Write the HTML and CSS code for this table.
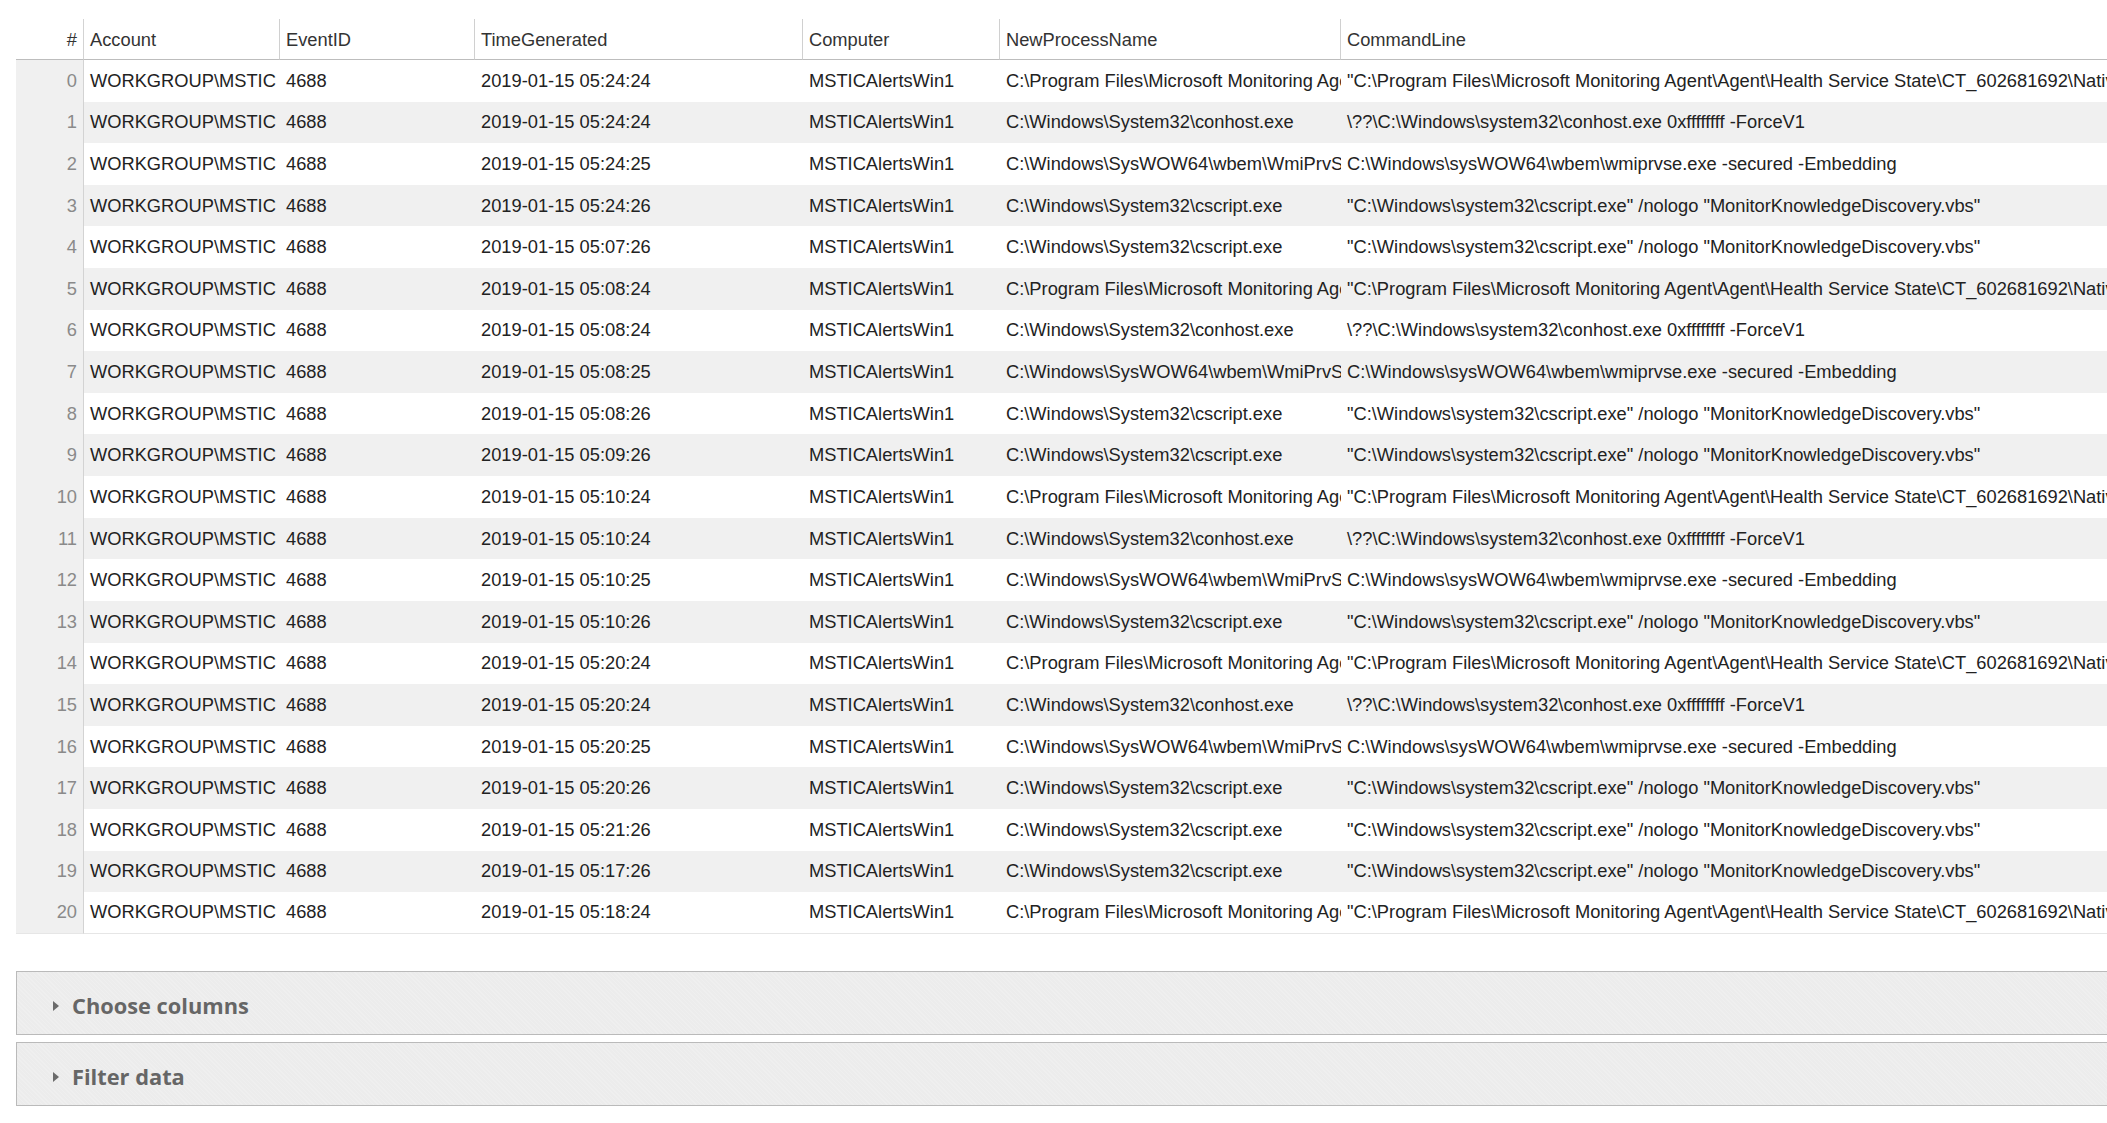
FILE: index.html
```html
<!DOCTYPE html>
<html>
<head>
<meta charset="utf-8">
<link rel="stylesheet" href="styles.css">
</head>
<body>
<div class="page">
  <table class="grid">
    <colgroup>
      <col class="c-idx"><col class="c-acc"><col class="c-evt"><col class="c-time"><col class="c-comp"><col class="c-proc"><col class="c-cmd">
    </colgroup>
    <thead>
      <tr><th class="idx">#</th><th>Account</th><th>EventID</th><th>TimeGenerated</th><th>Computer</th><th>NewProcessName</th><th>CommandLine</th></tr>
    </thead>
    <tbody id="rows">
      <tr><td class="idx">0</td><td>WORKGROUP\MSTIC</td><td>4688</td><td>2019-01-15 05:24:24</td><td>MSTICAlertsWin1</td><td>C:\Program Files\Microsoft Monitoring Agent\Agent\MonitoringHost.exe</td><td>"C:\Program Files\Microsoft Monitoring Agent\Agent\Health Service State\CT_602681692\NativeDSC\DesiredStateConfiguration\ASMHost.exe" GetInventory</td></tr>
      <tr><td class="idx">1</td><td>WORKGROUP\MSTIC</td><td>4688</td><td>2019-01-15 05:24:24</td><td>MSTICAlertsWin1</td><td>C:\Windows\System32\conhost.exe</td><td>\??\C:\Windows\system32\conhost.exe 0xffffffff -ForceV1</td></tr>
      <tr><td class="idx">2</td><td>WORKGROUP\MSTIC</td><td>4688</td><td>2019-01-15 05:24:25</td><td>MSTICAlertsWin1</td><td>C:\Windows\SysWOW64\wbem\WmiPrvSE.exe</td><td>C:\Windows\sysWOW64\wbem\wmiprvse.exe -secured -Embedding</td></tr>
      <tr><td class="idx">3</td><td>WORKGROUP\MSTIC</td><td>4688</td><td>2019-01-15 05:24:26</td><td>MSTICAlertsWin1</td><td>C:\Windows\System32\cscript.exe</td><td>"C:\Windows\system32\cscript.exe" /nologo "MonitorKnowledgeDiscovery.vbs"</td></tr>
      <tr><td class="idx">4</td><td>WORKGROUP\MSTIC</td><td>4688</td><td>2019-01-15 05:07:26</td><td>MSTICAlertsWin1</td><td>C:\Windows\System32\cscript.exe</td><td>"C:\Windows\system32\cscript.exe" /nologo "MonitorKnowledgeDiscovery.vbs"</td></tr>
      <tr><td class="idx">5</td><td>WORKGROUP\MSTIC</td><td>4688</td><td>2019-01-15 05:08:24</td><td>MSTICAlertsWin1</td><td>C:\Program Files\Microsoft Monitoring Agent\Agent\MonitoringHost.exe</td><td>"C:\Program Files\Microsoft Monitoring Agent\Agent\Health Service State\CT_602681692\NativeDSC\DesiredStateConfiguration\ASMHost.exe" GetInventory</td></tr>
      <tr><td class="idx">6</td><td>WORKGROUP\MSTIC</td><td>4688</td><td>2019-01-15 05:08:24</td><td>MSTICAlertsWin1</td><td>C:\Windows\System32\conhost.exe</td><td>\??\C:\Windows\system32\conhost.exe 0xffffffff -ForceV1</td></tr>
      <tr><td class="idx">7</td><td>WORKGROUP\MSTIC</td><td>4688</td><td>2019-01-15 05:08:25</td><td>MSTICAlertsWin1</td><td>C:\Windows\SysWOW64\wbem\WmiPrvSE.exe</td><td>C:\Windows\sysWOW64\wbem\wmiprvse.exe -secured -Embedding</td></tr>
      <tr><td class="idx">8</td><td>WORKGROUP\MSTIC</td><td>4688</td><td>2019-01-15 05:08:26</td><td>MSTICAlertsWin1</td><td>C:\Windows\System32\cscript.exe</td><td>"C:\Windows\system32\cscript.exe" /nologo "MonitorKnowledgeDiscovery.vbs"</td></tr>
      <tr><td class="idx">9</td><td>WORKGROUP\MSTIC</td><td>4688</td><td>2019-01-15 05:09:26</td><td>MSTICAlertsWin1</td><td>C:\Windows\System32\cscript.exe</td><td>"C:\Windows\system32\cscript.exe" /nologo "MonitorKnowledgeDiscovery.vbs"</td></tr>
      <tr><td class="idx">10</td><td>WORKGROUP\MSTIC</td><td>4688</td><td>2019-01-15 05:10:24</td><td>MSTICAlertsWin1</td><td>C:\Program Files\Microsoft Monitoring Agent\Agent\MonitoringHost.exe</td><td>"C:\Program Files\Microsoft Monitoring Agent\Agent\Health Service State\CT_602681692\NativeDSC\DesiredStateConfiguration\ASMHost.exe" GetInventory</td></tr>
      <tr><td class="idx">11</td><td>WORKGROUP\MSTIC</td><td>4688</td><td>2019-01-15 05:10:24</td><td>MSTICAlertsWin1</td><td>C:\Windows\System32\conhost.exe</td><td>\??\C:\Windows\system32\conhost.exe 0xffffffff -ForceV1</td></tr>
      <tr><td class="idx">12</td><td>WORKGROUP\MSTIC</td><td>4688</td><td>2019-01-15 05:10:25</td><td>MSTICAlertsWin1</td><td>C:\Windows\SysWOW64\wbem\WmiPrvSE.exe</td><td>C:\Windows\sysWOW64\wbem\wmiprvse.exe -secured -Embedding</td></tr>
      <tr><td class="idx">13</td><td>WORKGROUP\MSTIC</td><td>4688</td><td>2019-01-15 05:10:26</td><td>MSTICAlertsWin1</td><td>C:\Windows\System32\cscript.exe</td><td>"C:\Windows\system32\cscript.exe" /nologo "MonitorKnowledgeDiscovery.vbs"</td></tr>
      <tr><td class="idx">14</td><td>WORKGROUP\MSTIC</td><td>4688</td><td>2019-01-15 05:20:24</td><td>MSTICAlertsWin1</td><td>C:\Program Files\Microsoft Monitoring Agent\Agent\MonitoringHost.exe</td><td>"C:\Program Files\Microsoft Monitoring Agent\Agent\Health Service State\CT_602681692\NativeDSC\DesiredStateConfiguration\ASMHost.exe" GetInventory</td></tr>
      <tr><td class="idx">15</td><td>WORKGROUP\MSTIC</td><td>4688</td><td>2019-01-15 05:20:24</td><td>MSTICAlertsWin1</td><td>C:\Windows\System32\conhost.exe</td><td>\??\C:\Windows\system32\conhost.exe 0xffffffff -ForceV1</td></tr>
      <tr><td class="idx">16</td><td>WORKGROUP\MSTIC</td><td>4688</td><td>2019-01-15 05:20:25</td><td>MSTICAlertsWin1</td><td>C:\Windows\SysWOW64\wbem\WmiPrvSE.exe</td><td>C:\Windows\sysWOW64\wbem\wmiprvse.exe -secured -Embedding</td></tr>
      <tr><td class="idx">17</td><td>WORKGROUP\MSTIC</td><td>4688</td><td>2019-01-15 05:20:26</td><td>MSTICAlertsWin1</td><td>C:\Windows\System32\cscript.exe</td><td>"C:\Windows\system32\cscript.exe" /nologo "MonitorKnowledgeDiscovery.vbs"</td></tr>
      <tr><td class="idx">18</td><td>WORKGROUP\MSTIC</td><td>4688</td><td>2019-01-15 05:21:26</td><td>MSTICAlertsWin1</td><td>C:\Windows\System32\cscript.exe</td><td>"C:\Windows\system32\cscript.exe" /nologo "MonitorKnowledgeDiscovery.vbs"</td></tr>
      <tr><td class="idx">19</td><td>WORKGROUP\MSTIC</td><td>4688</td><td>2019-01-15 05:17:26</td><td>MSTICAlertsWin1</td><td>C:\Windows\System32\cscript.exe</td><td>"C:\Windows\system32\cscript.exe" /nologo "MonitorKnowledgeDiscovery.vbs"</td></tr>
      <tr><td class="idx">20</td><td>WORKGROUP\MSTIC</td><td>4688</td><td>2019-01-15 05:18:24</td><td>MSTICAlertsWin1</td><td>C:\Program Files\Microsoft Monitoring Agent\Agent\MonitoringHost.exe</td><td>"C:\Program Files\Microsoft Monitoring Agent\Agent\Health Service State\CT_602681692\NativeDSC\DesiredStateConfiguration\ASMHost.exe" GetInventory</td></tr>
    </tbody>
  </table>

  <div class="panels">
    <div class="panel"><span class="caret"></span><span class="panel-title">Choose columns</span></div>
    <div class="panel"><span class="caret"></span><span class="panel-title">Filter data</span></div>
  </div>
</div>
</body>
</html>
```

FILE: styles.css
```css
html, body {
  margin: 0;
  padding: 0;
  background: #ffffff;
  overflow: hidden;
}

.page {
  width: 2400px;
  padding: 19px 0 0 16px;
  font-family: "Liberation Sans", Arial, sans-serif;
}

.grid {
  border-collapse: separate;
  border-spacing: 0;
  table-layout: fixed;
  width: 2225px;
  font-size: 18.3px;
  color: #222222;
}

.c-idx { width: 68px; }
.c-acc { width: 196px; }
.c-evt { width: 195px; }
.c-time { width: 328px; }
.c-comp { width: 197px; }
.c-proc { width: 341px; }
.c-cmd { width: 900px; }

.grid th,
.grid td {
  box-sizing: border-box;
  padding: 0 0 0 6px;
  white-space: nowrap;
  overflow: hidden;
  text-overflow: clip;
  text-align: left;
  vertical-align: middle;
}

.grid th {
  height: 41px;
  padding-top: 1px;
  font-weight: normal;
  color: #333333;
  border-right: 1px solid #d0d0d0;
  border-bottom: 1px solid #bdbdbd;
  background: #ffffff;
}

.grid th:last-child { border-right: none; }

.grid td {
  height: 41.62px;
}

.grid tbody tr:nth-child(even) td { background: #f0f0f0; }

.grid .idx {
  text-align: right;
  padding-left: 0;
  padding-right: 6px;
  border-right: 1px solid #d3d3d3;
}

.grid td.idx {
  background: #f0f0f0;
  color: #8a8a8a;
}

.grid tbody tr:last-child td {
  border-bottom: 1px solid #e6e6e6;
}

.panels {
  margin-top: 37px;
  display: flex;
  flex-direction: column;
  gap: 7px;
}

.panel {
  box-sizing: border-box;
  width: 2300px;
  height: 64px;
  border: 1px solid #bababa;
  background-color: #ececec;
  background-image: repeating-linear-gradient(45deg, rgba(255,255,255,0.18) 0 1px, rgba(0,0,0,0) 1px 3px);
  display: flex;
  align-items: center;
  padding: 7px 0 0 36px;
  font-family: "Open Sans", "Noto Sans", sans-serif;
  font-weight: bold;
  font-size: 21.8px;
  color: #666666;
}

.caret {
  width: 0;
  height: 0;
  border-top: 5.5px solid transparent;
  border-bottom: 5.5px solid transparent;
  border-left: 6px solid #6b6b6b;
  margin-right: 13px;
}

.panel-title {
  line-height: 1;
}
```
